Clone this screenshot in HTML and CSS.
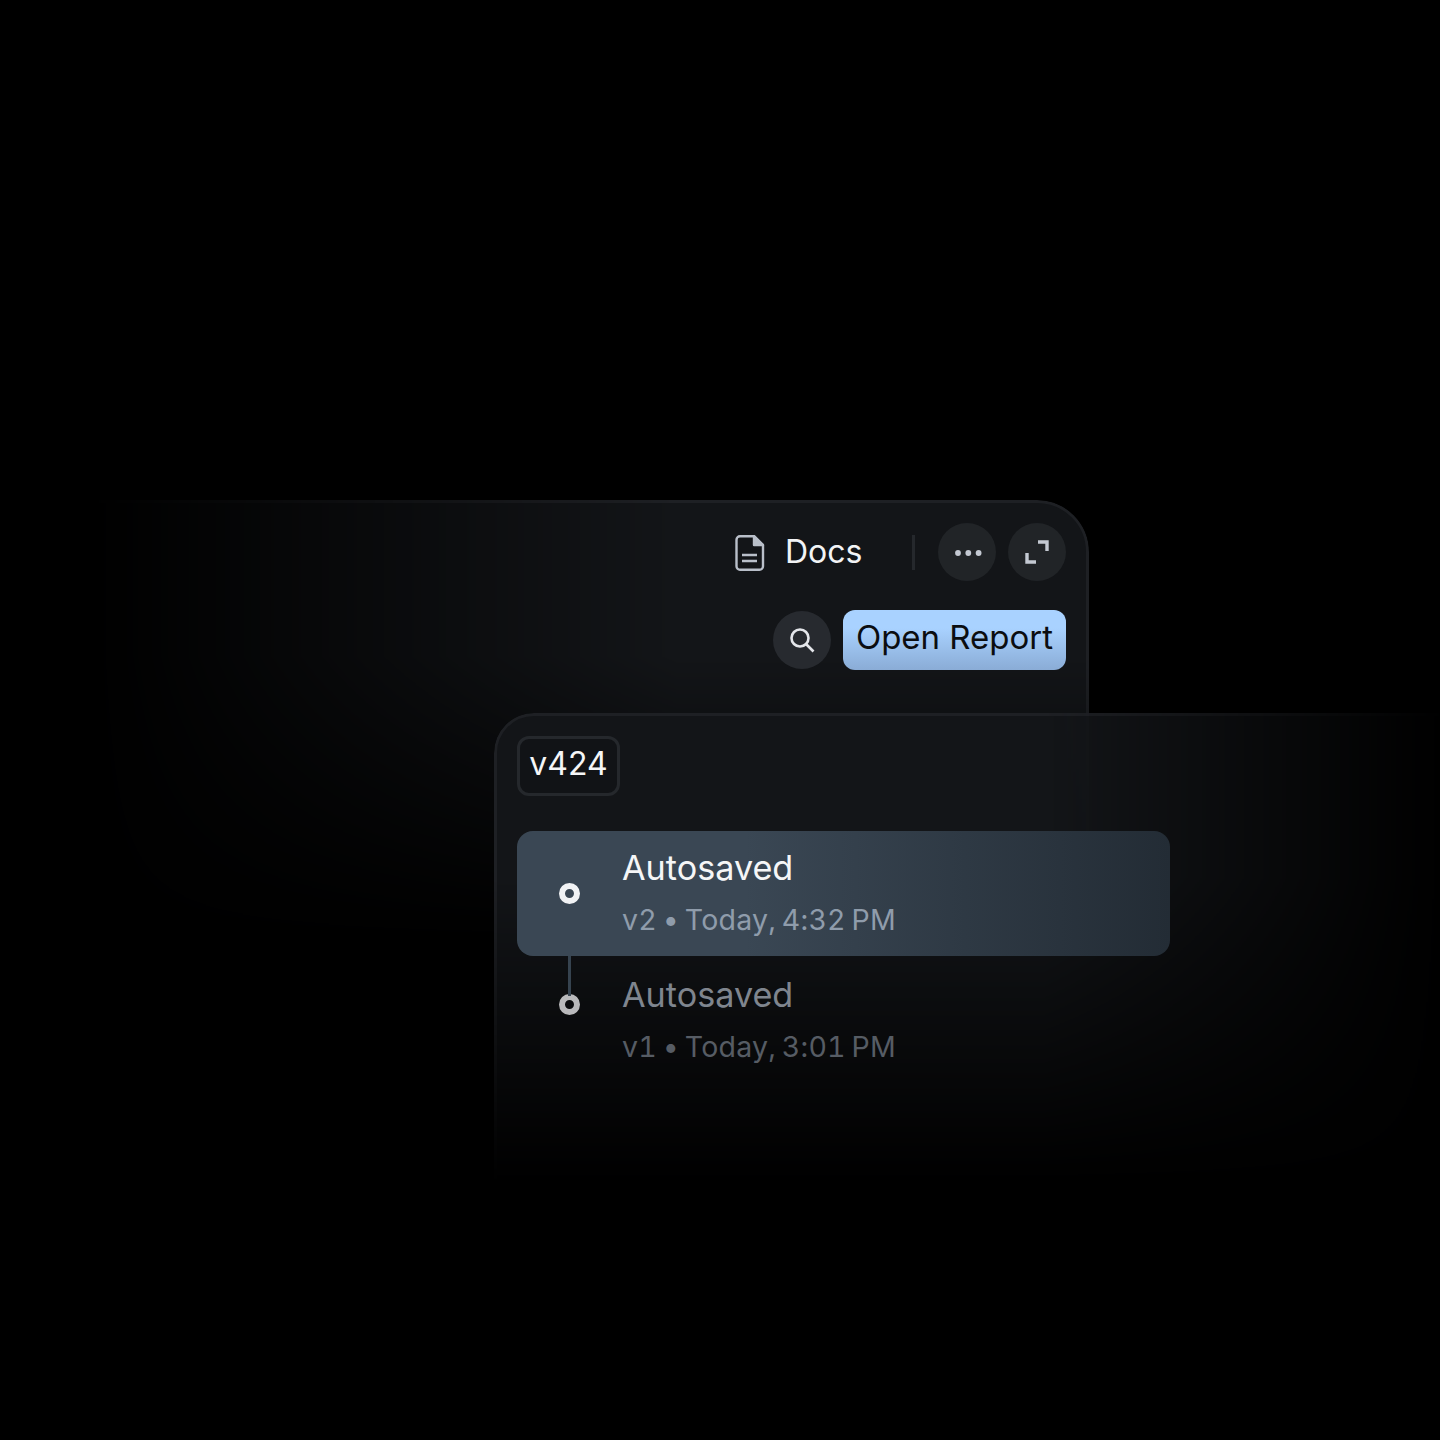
FILE: index.html
```html
<!DOCTYPE html>
<html lang="en">
<head>
    <meta charset="UTF-8">
    <title>Version history</title>
    <link rel="stylesheet" href="styles.css">
</head>
<body>
<div class="stage">
    <!-- Back window -->
    <div class="window window-back">
        <div class="toolbar">
            <svg class="doc-icon" width="32" height="36" viewBox="0 0 32 36" fill="none" stroke="#b9bfc9" stroke-width="2.4">
                <path d="M6 1.200h14l9 8.800v21.300a3.500 3.500 0 0 1-3.500 3.500h-19.500a3.500 3.500 0 0 1-3.500-3.500v-26.600a3.500 3.500 0 0 1 3.500-3.500z" stroke-linejoin="round"/>
                <path d="M20 1.200v8.800h9z" fill="#b9bfc9" stroke-linejoin="round"/>
                <path d="M8 20h15M8 26h15"/>
            </svg>
            <span class="docs-label">Docs</span>
            <span class="divider"></span>
            <button class="round-btn">
                <svg class="dots-icon" width="28" height="8" viewBox="0 0 28 8" fill="#c4c9d2"><circle cx="4" cy="4" r="2.900"/><circle cx="14.300" cy="4" r="2.900"/><circle cx="24.600" cy="4" r="2.900"/></svg>
            </button>
            <button class="round-btn">
                <svg width="24" height="24" viewBox="0 0 24 24" fill="none" stroke="#c4c9d2" stroke-width="3.400"><path d="M13 2h9v9M2 13v9h9"/></svg>
            </button>
        </div>
        <div class="toolbar toolbar-second">
            <button class="round-btn round-btn-light">
                <svg width="28" height="28" viewBox="0 0 28 28" fill="none" stroke="#e4e6ea" stroke-width="2.600"><circle cx="12" cy="12" r="8.500"/><path d="M18 18l7.500 7.500"/></svg>
            </button>
            <button class="open-btn">Open Report</button>
        </div>
    </div>

    <!-- Front window -->
    <div class="window window-front">
        <div class="version-tag">v424</div>
        <div class="history">
            <div class="history-row history-row-active">
                <span class="dot"></span>
                <div class="history-text">
                    <div class="history-title">Autosaved</div>
                    <div class="history-meta">v2 • Today, 4:32 PM</div>
                </div>
            </div>
            <div class="history-row history-row-old">
                <span class="line"></span>
                <span class="dot dot-old"></span>
                <div class="history-text">
                    <div class="history-title">Autosaved</div>
                    <div class="history-meta">v1 • Today, 3:01 PM</div>
                </div>
            </div>
        </div>
    </div>
</div>
</body>
</html>
```

FILE: styles.css
```css
body {
    margin: 0;
    background-color: #000;
    font-family: "Inter", "Noto Sans", sans-serif;
}
.stage {
    position: relative;
    width: 1440px;
    height: 1440px;
    overflow: hidden;
}
.window {
    position: absolute;
    box-sizing: border-box;
    isolation: isolate;
}
/* panel background lives here so the fade doesn't touch the content */
.window::before {
    content: "";
    position: absolute;
    inset: 0;
    z-index: -1;
    box-sizing: border-box;
    background-color: #131518;
    border: 3px solid #1e2024;
}
.window-back {
    left: 60px;
    top: 500px;
    width: 1029px;
    height: 520px;
    padding: 23px 23px 0 0;
}
.window-back::before {
    border-radius: 0 52px 0 0;
    -webkit-mask-image: linear-gradient(to right, transparent 3%, #000 60%), linear-gradient(to bottom, #000 30%, transparent 85%);
    -webkit-mask-composite: source-in;
    mask-image: linear-gradient(to right, transparent 3%, #000 60%), linear-gradient(to bottom, #000 30%, transparent 85%);
    mask-composite: intersect;
}
.window-front {
    left: 494px;
    top: 713px;
    width: 946px;
    height: 470px;
    padding: 23px 0 0 23px;
}
.window-front::before {
    width: 1000px;
    border-radius: 40px 0 0 0;
    -webkit-mask-image: linear-gradient(to bottom, #000 35%, transparent 100%), linear-gradient(to left, transparent 5%, #000 45%);
    -webkit-mask-composite: source-in;
    mask-image: linear-gradient(to bottom, #000 35%, transparent 100%), linear-gradient(to left, transparent 5%, #000 45%);
    mask-composite: intersect;
}
.toolbar {
    display: flex;
    justify-content: flex-end;
    align-items: center;
}
.toolbar-second {
    margin-top: 29px;
    gap: 12px;
}
.doc-icon {
    margin: 2px 19px 0 0;
}
.docs-label {
    color: #f2f3f5;
    font-size: 32px;
    width: 127px;
    padding-bottom: 2px;
}
.divider {
    width: 3px;
    height: 35px;
    background-color: #25282c;
    margin-right: 23px;
}
.round-btn {
    width: 58px;
    height: 58px;
    border: none;
    border-radius: 50%;
    background-color: #212427;
    margin-left: 12px;
    padding: 0;
    display: flex;
    align-items: center;
    justify-content: center;
}
.divider + .round-btn {
    margin-left: 0;
}
.round-btn-light {
    background-color: #272a2f;
    margin-left: 0;
}
.dots-icon {
    margin: 1px 0 0 1px;
}
.open-btn {
    height: 60px;
    width: 223px;
    border: none;
    border-radius: 12px;
    background: linear-gradient(to bottom, #a9d2ff 30%, #8aacd6 100%);
    color: #0b0d10;
    font-family: inherit;
    font-size: 33px;
    padding: 0 0 6px;
}
.version-tag {
    box-sizing: border-box;
    width: 103px;
    height: 60px;
    border: 3px solid #25282c;
    border-radius: 12px;
    background-color: #111316;
    color: #f5f6f7;
    font-size: 32px;
    line-height: 50px;
    text-align: center;
}
.history {
    margin-top: 35px;
    width: 653px;
}
.history-row {
    position: relative;
    height: 125px;
    box-sizing: border-box;
    display: flex;
    align-items: center;
    padding-left: 42px;
    border-radius: 16px;
}
.history-row-active {
    background: linear-gradient(to right, #3a4754 35%, #232c35 100%);
}
.history-row-old {
    height: 130px;
    align-items: flex-start;
}
.history-row-old .dot {
    margin-top: 38px;
}
.history-text {
    margin-left: 42px;
}
.history-row-old .history-text {
    margin-top: 17px;
}
.dot {
    box-sizing: border-box;
    flex: none;
    width: 21px;
    height: 21px;
    border: 6px solid #f1f3f5;
    border-radius: 50%;
}
.dot-old {
    border-color: #b9b9bb;
}
.line {
    position: absolute;
    left: 51px;
    top: 0;
    width: 3px;
    height: 40px;
    background-color: #36434f;
}
.history-title {
    color: #f5f6f7;
    font-size: 34.2px;
    line-height: 44px;
}
.history-meta {
    color: #8f9cab;
    font-size: 28.5px;
    font-variant-numeric: tabular-nums;
    letter-spacing: 0.2px;
    word-spacing: -2px;
    line-height: 44px;
    margin-top: 8px;
}
.history-row-old .history-title {
    color: #7f858e;
}
.history-row-old .history-meta {
    color: #565c64;
}
```
